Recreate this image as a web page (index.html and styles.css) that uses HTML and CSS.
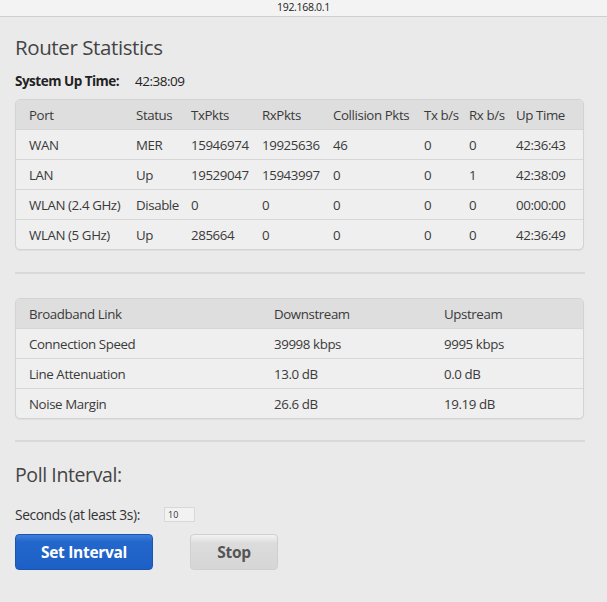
FILE: index.html
```html
<!DOCTYPE html>
<html>
<head>
<meta charset="utf-8">
<link rel="stylesheet" href="styles.css">
</head>
<body>
<div class="topbar">192.168.0.1</div>
<main class="page">
  <h1 class="title">Router Statistics</h1>
  <div class="uptime"><span class="uptime-label">System Up Time:</span><span>42:38:09</span></div>
  <table class="stats ports">
    <thead>
      <tr><th class="c-port">Port</th><th class="c-status">Status</th><th class="c-tx">TxPkts</th><th class="c-rx">RxPkts</th><th class="c-col">Collision Pkts</th><th class="c-txb">Tx b/s</th><th class="c-rxb">Rx b/s</th><th>Up Time</th></tr>
    </thead>
    <tbody>
      <tr><td>WAN</td><td>MER</td><td>15946974</td><td>19925636</td><td>46</td><td>0</td><td>0</td><td>42:36:43</td></tr>
      <tr><td>LAN</td><td>Up</td><td>19529047</td><td>15943997</td><td>0</td><td>0</td><td>1</td><td>42:38:09</td></tr>
      <tr><td>WLAN (2.4 GHz)</td><td>Disable</td><td>0</td><td>0</td><td>0</td><td>0</td><td>0</td><td>00:00:00</td></tr>
      <tr><td>WLAN (5 GHz)</td><td>Up</td><td>285664</td><td>0</td><td>0</td><td>0</td><td>0</td><td>42:36:49</td></tr>
    </tbody>
  </table>
  <hr class="rule rule-1">
  <table class="stats link">
    <thead>
      <tr><th class="l-name">Broadband Link</th><th class="l-down">Downstream</th><th>Upstream</th></tr>
    </thead>
    <tbody>
      <tr><td>Connection Speed</td><td>39998 kbps</td><td>9995 kbps</td></tr>
      <tr><td>Line Attenuation</td><td>13.0 dB</td><td>0.0 dB</td></tr>
      <tr><td>Noise Margin</td><td>26.6 dB</td><td>19.19 dB</td></tr>
    </tbody>
  </table>
  <hr class="rule rule-2">
  <h2 class="subtitle">Poll Interval:</h2>
  <div class="poll-row"><span class="poll-label">Seconds (at least 3s):</span><input class="poll-input" type="text" value="10"></div>
  <div class="buttons">
    <button class="btn btn-primary">Set Interval</button>
    <button class="btn btn-secondary">Stop</button>
  </div>
</main>
</body>
</html>
```

FILE: styles.css
```css
html, body {
  margin: 0;
  padding: 0;
  background: #eaeaea;
}
body {
  font-family: "Open Sans", "Noto Sans", sans-serif;
  color: #333;
  width: 607px;
  height: 602px;
  overflow: hidden;
}
.topbar {
  height: 16px;
  line-height: 15px;
  background: #f3f3f3;
  border-bottom: 1px solid #cfcfcf;
  text-align: center;
  font-size: 10.5px;
  color: #222;
  letter-spacing: -0.3px;
}
.page {
  padding: 0 23px 0 15px;
}
.title {
  margin: 18px 0 0 0;
  font-weight: 400;
  font-size: 20.5px;
  line-height: 24px;
  color: #444;
  letter-spacing: -0.4px;
}
.uptime {
  margin-top: 14px;
  font-size: 13.5px;
  line-height: 17px;
  color: #222;
  display: flex;
  letter-spacing: -0.5px;
}
.uptime-label {
  font-weight: 700;
  width: 120px;
}
.stats {
  width: 569px;
  border-collapse: separate;
  border-spacing: 0;
  border: 1px solid #d3d3d3;
  border-radius: 5px;
  background: #efefef;
  font-size: 13.3px;
  color: #3a3a3a;
  letter-spacing: -0.4px;
  box-shadow: 0 1px 1px rgba(0,0,0,0.05);
}
.stats th, .stats td {
  text-align: left;
  font-weight: 400;
  padding: 0;
  height: 29px;
  white-space: nowrap;
  border-top: 1px solid #d6d6d6;
}
.stats th {
  background: #dedede;
  border-top: none;
  height: 29px;
}
.stats thead tr th:first-child { border-top-left-radius: 4px; }
.stats thead tr th:last-child { border-top-right-radius: 4px; }
.stats th:first-child, .stats td:first-child { padding-left: 13px; }
.ports {
  margin-top: 9px;
}
.ports .c-port { width: 107px; }
.ports .c-status { width: 55px; }
.ports .c-tx { width: 71px; }
.ports .c-rx { width: 71px; }
.ports .c-col { width: 91px; }
.ports .c-txb { width: 45px; }
.ports .c-rxb { width: 47px; }
.rule {
  border: none;
  height: 2px;
  background: #d9d9d9;
  width: 570px;
  margin: 0;
}
.rule-1 { margin-top: 22px; }
.link { margin-top: 24px; }
.link .l-name { width: 245px; }
.link .l-down { width: 170px; }
.rule-2 { margin-top: 21px; }
.subtitle {
  margin: 21px 0 0 0;
  font-weight: 400;
  font-size: 19.5px;
  line-height: 24px;
  color: #444;
  letter-spacing: -0.4px;
}
.poll-row {
  display: flex;
  align-items: center;
  margin-top: 18px;
  font-size: 13.8px;
  color: #333;
  letter-spacing: -0.4px;
}
.poll-label { width: 149px; }
.poll-input {
  width: 23px;
  height: 13px;
  padding: 0 3px;
  border: 1px solid #d8d8d8;
  background: #f2f2f2;
  font-family: "Open Sans", sans-serif;
  font-size: 9px;
  color: #333;
  outline: none;
}
.buttons {
  display: flex;
  gap: 37px;
  margin-top: 10px;
}
.btn {
  height: 36px;
  border-radius: 4px;
  font-family: "Open Sans", sans-serif;
  font-weight: 700;
  font-size: 15.5px;
  letter-spacing: -0.3px;
  cursor: pointer;
  padding: 0;
}
.btn-primary {
  width: 138px;
  background: linear-gradient(#3f7fdb 0%, #2467cc 20%, #1c5fc6 100%);
  border: 1px solid #1a55b0;
  color: #fff;
}
.btn-secondary {
  width: 88px;
  background: linear-gradient(#f3f3f3 0%, #dcdcdc 25%, #d6d6d6 100%);
  border: 1px solid #cfcfcf;
  color: #555;
}
```
